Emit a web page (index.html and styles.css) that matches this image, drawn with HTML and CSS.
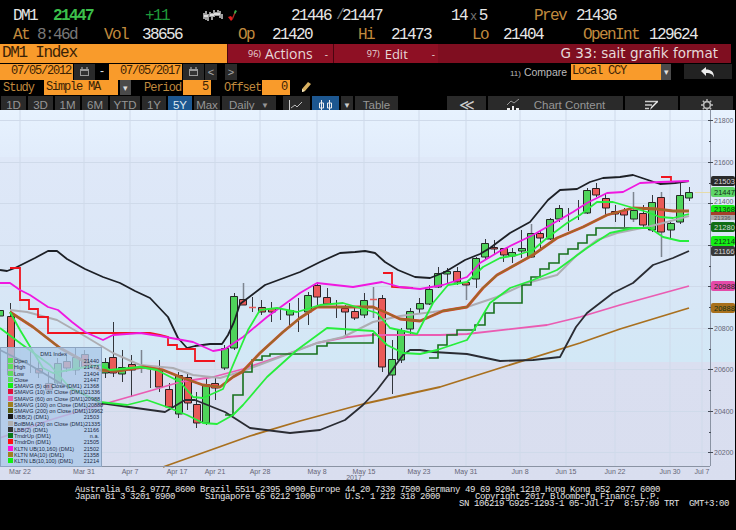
FILE: index.html
```html
<!DOCTYPE html>
<html lang="en">
<head>
    <meta charset="UTF-8">
    <meta name="viewport" content="width=device-width, initial-scale=1.0">
    <title>DM1 Index</title>
    <link rel="stylesheet" href="styles.css">
</head>
<body>

    <!-- quote lines -->
    <div class="quote quote-top">
        <span class="white">DM1</span>
        <span class="last">21447</span>
        <span class="change">+11</span>
        <svg class="spark" width="20" height="12" viewBox="0 0 20 12"><path d="M1 3v6M3 1v9M5 4v7M7 2v5M9 3v7M11 0v7M13 2v4M15 0v6M17 1v7M19 4v5M1 6h4M7 5h4M11 4h6" fill="none" stroke="#f2f2f2" stroke-width="1.3"/></svg>
        <svg class="tick" width="10" height="12" viewBox="0 0 10 12"><path d="M0 7l3 4 2-2-2-3z" fill="#e01e1e"/><path d="M4 8l1 1 3-7-1-1z" fill="#b02a22"/><path d="M6 3l1-3 2 1-2 3z" fill="#35b048"/></svg>
        <span class="white">21446</span>
        <span class="dim slash">/</span>
        <span class="white">21447</span>
        <span class="white">14<small class="dim times">x</small>5</span>
        <span class="label">Prev</span>
        <span class="white">21436</span>
    </div>
    <div class="quote quote-bottom">
        <span class="label">At</span>
        <span class="dim">8:46d</span>
        <span class="label">Vol</span>
        <span class="white">38656</span>
        <span class="label">Op</span>
        <span class="white">21420</span>
        <span class="label">Hi</span>
        <span class="white">21473</span>
        <span class="label">Lo</span>
        <span class="white">21404</span>
        <span class="label">OpenInt</span>
        <span class="white">129624</span>
    </div>

    <!-- title bar -->
    <div class="title-bar">
        <div class="ticker">DM1 Index</div>
        <div class="menu menu-actions"><b>96)</b> Actions <i>-</i></div>
        <div class="menu menu-edit"><b>97)</b> Edit <i>-</i></div>
        <div class="chart-name">G 33: sait grafik format</div>
    </div>

    <!-- dates and compare -->
    <div class="date-row">
        <div class="field date-field">07/05/2012</div>
        <div class="btn cal-btn"><svg width="11" height="10" viewBox="0 0 11 10"><path d="M1 2h9v7H1z" fill="#999"/><path d="M2 4h7v4H2z" fill="#333"/><path d="M3 0v2M8 0v2" stroke="#bbb"/></svg></div>
        <div class="date-dash">-</div>
        <div class="field date-field">07/05/2017</div>
        <div class="btn cal-btn"><svg width="11" height="10" viewBox="0 0 11 10"><path d="M1 2h9v7H1z" fill="#999"/><path d="M2 4h7v4H2z" fill="#333"/><path d="M3 0v2M8 0v2" stroke="#bbb"/></svg></div>
        <div class="btn nav-btn">&lt;</div>
        <div class="btn nav-btn nav-next">&gt;</div>
        <div class="compare"><small>11)</small> Compare</div>
        <div class="field ccy-field">Local CCY</div>
        <div class="dd">&#9662;</div>
        <div class="btn back-btn"><svg width="14" height="12" viewBox="0 0 14 12"><path d="M0 5l5-4v2.500c5 0 8 2 8 8-1-3-3-4.500-8-4.500v3z" fill="#eee"/></svg></div>
    </div>

    <!-- study -->
    <div class="study-row">
        <span class="study-label label-study">Study</span>
        <div class="field study-field">Simple MA</div>
        <div class="dd">&#9662;</div>
        <span class="study-label label-period">Period</span>
        <div class="field num-field">5</div>
        <span class="study-label label-offset">Offset</span>
        <div class="field num-field">0</div>
        <svg class="pencil" width="12" height="13" viewBox="0 0 12 13"><path d="M8 1l3 2-6 7-3 1 0-3z" fill="#d8b060"/><path d="M2 8l3 2-3 1z" fill="#f0e4c0"/></svg>
    </div>

    <!-- toolbar -->
    <div class="toolbar">
        <div class="tool">1D</div>
        <div class="tool">3D</div>
        <div class="tool">1M</div>
        <div class="tool">6M</div>
        <div class="tool">YTD</div>
        <div class="tool">1Y</div>
        <div class="tool active">5Y</div>
        <div class="tool">Max</div>
        <div class="tool">Daily &nbsp;<small>&#9660;</small></div>
        <div></div>
        <div class="tool"><svg width="15" height="11" viewBox="0 0 15 11"><path d="M.5 0v10.500H15" stroke="#ccc" fill="none"/><path d="M2 8l4-3 2 2 5-5" stroke="#bbb" fill="none"/></svg></div>
        <div class="tool active"><svg width="15" height="11" viewBox="0 0 15 11"><path d="M1.500 3h4v5h-4zM9.500 3h4v5h-4zM3.500 0v11M11.500 0v11" stroke="#eee" fill="none"/></svg></div>
        <div class="tool"><small class="bright">&#9660;</small></div>
        <div class="tool">Table</div>
        <div></div>
        <div class="tool bright">&#8810;</div>
        <div class="tool"><svg class="content-icon" width="14" height="12" viewBox="0 0 14 12"><path d="M1 6l4-4 3 2 5-4" stroke="#999" fill="none"/><path d="M1 9h3v3H1zM6 7h2v5H6zM10 9h3v3h-3z" fill="#eee"/></svg>Chart Content</div>
        <div class="tool"><svg width="13" height="11" viewBox="0 0 13 11"><path d="M0 1.500h13M0 5h7M0 8.500h4" stroke="#ccc" stroke-width="1.400"/><path d="M5 10l1-3 6-6 1 1-6 6z" fill="#eee"/></svg></div>
        <div class="tool"><svg width="12" height="12" viewBox="0 0 12 12"><circle cx="6" cy="6" r="3.400" fill="none" stroke="#bbb" stroke-width="1.600"/><path d="M6 0v2.400M6 9.600V12M0 6h2.400M9.600 6H12M1.800 1.800l1.700 1.700M8.500 8.500l1.700 1.700M10.200 1.800L8.500 3.500M3.500 8.500l-1.700 1.700" stroke="#bbb" stroke-width="1.400"/></svg></div>
    </div>

    <!-- chart -->
    <div class="chart">
        <svg class="chart-svg" width="736" height="370" viewBox="0 110 736 370">
            <defs>
                <linearGradient id="bgTop" x1="0" y1="0" x2="0" y2="1">
                    <stop offset="0" stop-color="#e7f2fe"/>
                    <stop offset="1" stop-color="#e1ecfb"/>
                </linearGradient>
                <linearGradient id="bgMid" x1="0" y1="0" x2="0" y2="1">
                    <stop offset="0" stop-color="#dfe8f8"/>
                    <stop offset="0.55" stop-color="#dae6f6"/>
                    <stop offset="1" stop-color="#d2e8f6"/>
                </linearGradient>
                <linearGradient id="bgLow" x1="0" y1="0" x2="0" y2="1">
                    <stop offset="0" stop-color="#dadff0"/>
                    <stop offset="1" stop-color="#d9deef"/>
                </linearGradient>
            </defs>

            <rect x="0" y="110" width="735" height="47" fill="url(#bgTop)"/>
            <rect x="0" y="157" width="735" height="205" fill="url(#bgMid)"/>
            <rect x="0" y="362" width="735" height="118" fill="url(#bgLow)"/>

            <!-- grid -->
            <path class="grid" d="M20 110V466M84 110V466M130 110V466M177 110V466M215 110V466M260 110V466M317 110V466M364 110V466M419 110V466M466 110V466M520 110V466M566 110V466M615 110V466M670 110V466M702 110V466M0 120.500H710M0 162.500H710M0 203.500H710M0 245.500H710M0 286.500H710M0 328.500H710M0 369.500H710M0 411.500H710M0 452.500H710"/>

            <!-- wicks -->
            <path class="wick" d="M10.500 303V316M30.500 350V373M38.500 360V378M48.500 372V392M57.500 358V385M66.500 354V372M75.500 348V375M84.500 350V369M105.500 358V378M113.500 322V377M122.500 350V382M131.500 355V397M150.500 365V388M159.500 360V392M169.500 383V410M178.500 372V418M187.500 372V410M196.500 392V428M206.500 378V425M215.500 378V400M224.500 345V370M234.500 293V350M252.500 297V312M261.500 300V315M271.500 302V322M280.500 308V320M289.500 303V327M298.500 298V332M308.500 292V325M317.500 282V305M327.500 288V305M336.500 300V318M345.500 305V335M354.500 308V320M364.500 293V318M382.500 295V372M392.500 340V394M401.500 328V363M410.500 308V335M419.500 298V314M429.500 285V305M438.500 267V288M447.500 268V283M457.500 267V285M476.500 257V288M485.500 239V259M494.500 240V255M503.500 248V262M512.500 248V263M521.500 230V258M540.500 230V248M550.500 218V240M559.500 205V222M568.500 208V231M578.500 200V220M587.500 188V214M596.500 183V197M605.500 193V215M615.500 205V222M624.500 208V227M643.500 205V228M652.500 195V232M670.500 220V238M680.500 182V224M689.500 187V201"/>
            <path class="wick-light" d="M141.500 350V373M243.500 283V305M373.500 287V318M466.500 282V300M531.500 224V258M633.500 192V222M661.500 192V257"/>

            <!-- candle bodies -->
            <path class="candle-up" d="M-3.500 310.500h7V316h-7zM54.500 363.500h7V383h-7zM72.500 357.500h7V370h-7zM101.500 362.500h7V373h-7zM118.500 367.500h7V374h-7zM175.500 375.500h7V414h-7zM202.500 384.500h7V423h-7zM221.500 348.500h7V368h-7zM230.500 296.500h7V348h-7zM286.500 310.500h7V315h-7zM304.500 295.500h7V312h-7zM360.500 300.500h7V315h-7zM388.500 359.500h7V375h-7zM397.500 330.500h7V360h-7zM406.500 311.500h7V329h-7zM416.500 303.500h7V309h-7zM425.500 289.500h7V304h-7zM434.500 273.500h7V287h-7zM443.500 271.500h7V274h-7zM472.500 258.500h7V279h-7zM481.500 243.500h7V257h-7zM508.500 252.500h7V256h-7zM518.500 248.500h7V251h-7zM527.500 233.500h7V257h-7zM546.500 219.500h7V239h-7zM555.500 208.500h7V219h-7zM583.500 190.500h7V213h-7zM630.500 210.500h7V219h-7zM648.500 202.500h7V230h-7zM667.500 223.500h7V230h-7zM676.500 195.500h7V222h-7zM685.500 192.500h7V198h-7z"/>
            <path class="candle-down" d="M7.500 316.500h7V375h-7zM35.500 368.500h7V373h-7zM45.500 383.500h7V390h-7zM63.500 361.500h7V368h-7zM81.500 354.500h7V367h-7zM109.500 357.500h7V373h-7zM128.500 364.500h7V370h-7zM155.500 370.500h7V387h-7zM165.500 389.500h7V407h-7zM184.500 377.500h7V403h-7zM193.500 404.500h7V423h-7zM211.500 383.500h7V388h-7zM239.500 299.500h7V305h-7zM258.500 307.500h7V312h-7zM268.500 308.500h7V312h-7zM313.500 285.500h7V297h-7zM323.500 297.500h7V304h-7zM341.500 308.500h7V312h-7zM351.500 311.500h7V318h-7zM378.500 298.500h7V367h-7zM453.500 271.500h7V282h-7zM462.500 282.500h7V285h-7zM490.500 247.500h7V249h-7zM500.500 248.500h7V255h-7zM536.500 233.500h7V238h-7zM592.500 188.500h7V195h-7zM602.500 198.500h7V208h-7zM611.500 211.500h7V214h-7zM620.500 210.500h7V215h-7zM639.500 213.500h7V225h-7zM657.500 197.500h7V232h-7z"/>
            <path class="doji" d="M249 307.500h7M370 299.500h7"/>

            <!-- studies -->
            <polyline class="line slow-brown" points="163,467 250,436 300,421 363,404 440,387 500,368 580,343 620,329 689,308"/>
            <polyline class="line slow-pink" points="0,438 50,420 83,410 153,390 180,382 213,377 243,369 290,353 317,343 347,337 373,335 440,335 467,334 547,325 580,317 620,305 689,286"/>
            <polyline class="line band-black" points="0,270 7,271 15,268 35,258 48,251 57,251 67,259 85,269 103,277 120,283 135,291 150,298 168,317 178,338 187,348 195,346 210,344 222,344 228,335 234,322 240,304 265,285 300,272 320,262 340,253 355,252 365,251 375,253 385,262 398,270 415,277 430,278 445,272 465,260 480,254 490,248 510,233 530,222 548,200 560,190 577,189 590,182 603,178 620,177 633,175 648,180 660,184 675,183 689,181"/>
            <polyline class="line band-dark" points="0,350 30,365 60,383 85,395 100,403 165,412 185,400 195,400 225,412 250,428 290,433 320,430 345,420 363,405 377,390 390,373 403,355 410,350 420,350 433,352 467,354 500,361 533,360 560,357 576,327 587,313 613,293 633,283 653,265 673,258 689,251"/>
            <polyline class="line mid-gray" points="10,310 27,312 57,320 83,335 113,353 140,365 173,368 193,375 220,378 243,371 267,362 317,343 343,337 373,322 400,316 433,312 467,307 497,297 527,283 557,275 577,255 597,240 617,233 647,227 667,222 689,216"/>
            <polyline class="line step-green" points="225,415 233,415 233,395 243,395 243,372 252,372 252,360 262,360 262,356 270,356 270,354 317,354 317,346 327,346 327,343 373,343 373,333"/>
            <polyline class="line step-green" points="429,358 438,358 438,345 447,345 447,335 457,335 457,330 475,330 475,325 485,325 485,313 494,313 494,303 522,303 522,285 531,285 531,277 540,277 540,269 549,269 549,263 559,263 559,254 568,254 568,249 578,249 578,243 587,243 587,235 596,235 596,228 650,228 650,230"/>
            <polyline class="line step-red" points="10,268 20,268 20,300 29,300 29,309 38,309 38,317 48,317 48,333 150,333 160,335 168,337 168,345 177,345 177,349 195,349 195,361 215,361"/>
            <polyline class="line step-red" points="383,273 392,273 392,287 413,288"/>
            <polyline class="line step-red" points="661,177 671,177 671,182"/>
            <polyline class="line ma-red" points="10,312 33,327 60,348 100,370 117,371 143,367 163,370 183,378 203,385 220,387 233,377 242,372 260,353 283,332 300,318 317,307 343,307 373,307 387,313 400,319 420,321 443,311 467,307 483,288 497,275 533,255 557,238 583,227 607,215 633,208 657,209 673,211 689,211"/>
            <polyline class="line ma-brown" points="10,312 33,327 60,348 100,370 117,371 143,367 163,370 183,378 203,385 220,387 233,377 242,372 260,353 283,332 300,318 317,307 343,307 373,307 387,313 400,319 420,321 443,311 467,307 483,288 497,275 533,255 557,238 583,227 607,215 633,208 657,209 673,211 689,211"/>
            <polyline class="line upper-magenta" points="0,283 10,283 20,290 30,295 48,307 58,310 72,322 85,332 103,340 113,335 140,333 160,336 193,342 213,351 225,349 243,337 267,317 300,293 317,283 353,287 382,282 400,287 420,289 443,285 467,277 480,263 500,251 533,235 573,212 587,203 607,193 623,192 640,183 660,182 689,181"/>
            <polyline class="line fast-green" points="10,312 20,330 43,368 53,373 80,368 100,365 110,370 140,367 157,370 180,382 193,397 203,398 223,389 233,365 248,330 260,310 277,308 297,312 320,305 343,303 360,308 377,313 390,328 417,334 433,303 448,285 467,282 483,267 500,258 517,255 533,250 547,238 567,223 580,215 597,202 613,202 630,207 647,212 660,217 673,218 689,214"/>
            <polyline class="line fast-green" points="0,328 20,343 50,365 70,388 100,402 127,405 147,400 167,407 187,415 203,423 217,424 233,415 243,405 267,377 297,350 327,328 373,331 387,345 403,353 420,354 437,350 467,340 477,325 490,303 510,288 533,280 557,270 587,248 610,233 633,228 650,228 663,237 680,241 689,241"/>
            <path class="last-line" d="M695 192.500H710"/>

            <!-- right axis -->
            <path class="axis" d="M710.500 110V466M0 466.500H710"/>
            <path class="axis-tick" d="M708 120.500h5M709 141.500h2M708 162.500h5M709 183.500h2M708 203.500h5M709 224.500h2M708 245.500h5M709 266.500h2M708 286.500h5M709 307.500h2M708 328.500h5M709 349.500h2M708 369.500h5M709 390.500h2M708 411.500h5M709 432.500h2M708 452.500h5"/>
            <text class="axis-label" x="714" y="122.500">21800</text>
            <text class="axis-label" x="714" y="164.500">21600</text>
            <text class="axis-label" x="714" y="204">21400</text>
            <text class="axis-label" x="714" y="330.500">20800</text>
            <text class="axis-label" x="714" y="371.500">20600</text>
            <text class="axis-label" x="714" y="413.500">20400</text>
            <text class="axis-label" x="714" y="454.500">20200</text>

            <!-- price tags on the axis -->
            <rect x="711" y="176" width="24" height="10" rx="2" fill="#2a2a2a"/>
            <text class="tag-label tag-light" x="714" y="183.500">21503</text>
            <rect x="711" y="187" width="24" height="10" rx="2" fill="#5fd668"/>
            <text class="tag-label" x="714" y="194.500">21447</text>
            <rect x="711" y="214" width="24" height="6" fill="#a9a9a9"/>
            <rect x="711" y="205" width="24" height="8" rx="2" fill="#15ee15"/>
            <rect x="711" y="212" width="24" height="3" fill="#a5402a"/>
            <text class="tag-label" x="714" y="211.500">21368</text>
            <text class="tag-label tag-faint" x="714" y="220">21336</text>
            <rect x="711" y="222" width="24" height="10" rx="2" fill="#0f6e14"/>
            <text class="tag-label tag-light" x="714" y="229.500">21280</text>
            <rect x="711" y="236" width="24" height="10" rx="2" fill="#15ee15"/>
            <text class="tag-label" x="714" y="243.500">21214</text>
            <rect x="711" y="246" width="24" height="10" rx="2" fill="#3a3a3a"/>
            <text class="tag-label tag-light" x="714" y="253.500">21166</text>
            <rect x="711" y="281" width="24" height="10" rx="2" fill="#e44aa8"/>
            <text class="tag-label" x="714" y="288.500">20988</text>
            <rect x="711" y="303" width="24" height="10" rx="2" fill="#a8701c"/>
            <text class="tag-label" x="714" y="310.500">20888</text>

            <!-- date axis -->
            <g class="date-labels">
                <text x="20" y="473.500">Mar 22</text>
                <text x="84" y="473.500">Mar 31</text>
                <text x="130" y="473.500">Apr 7</text>
                <text x="177" y="473.500">Apr 17</text>
                <text x="215" y="473.500">Apr 21</text>
                <text x="260" y="473.500">Apr 28</text>
                <text x="317" y="473.500">May 8</text>
                <text x="364" y="473.500">May 15</text>
                <text x="419" y="473.500">May 23</text>
                <text x="466" y="473.500">May 31</text>
                <text x="520" y="473.500">Jun 8</text>
                <text x="566" y="473.500">Jun 15</text>
                <text x="615" y="473.500">Jun 22</text>
                <text x="670" y="473.500">Jun 30</text>
                <text x="702" y="473.500">Jul 7</text>
                <text x="354" y="479.500">2017</text>
            </g>
        </svg>

        <!-- legend lies over the chart -->
        <div class="legend">
            <div class="legend-title">DM1 Index</div>
            <div class="legend-row"><i class="swatch sw-ohlc"></i><span>Open</span><span>21440</span></div>
            <div class="legend-row"><i class="swatch sw-ohlc"></i><span>High</span><span>21473</span></div>
            <div class="legend-row"><i class="swatch sw-ohlc"></i><span>Low</span><span>21404</span></div>
            <div class="legend-row"><i class="swatch sw-ohlc"></i><span>Close</span><span>21447</span></div>
            <div class="legend-row"><i class="swatch sw-lime"></i><span>SMAVG (5) on Close (DM1)</span><span>21368</span></div>
            <div class="legend-row"><i class="swatch sw-red"></i><span>SMAVG (10) on Close (DM1)</span><span>21336</span></div>
            <div class="legend-row"><i class="swatch sw-pink"></i><span>SMAVG (60) on Close (DM1)</span><span>20988</span></div>
            <div class="legend-row"><i class="swatch sw-olive"></i><span>SMAVG (100) on Close (DM1)</span><span>20888</span></div>
            <div class="legend-row"><i class="swatch sw-darkolive"></i><span>SMAVG (200) on Close (DM1)</span><span>19962</span></div>
            <div class="legend-row"><i class="swatch sw-black"></i><span>UBB(2) (DM1)</span><span>21503</span></div>
            <div class="legend-row"><i class="swatch sw-gray"></i><span>BolBMA (20) on Close (DM1)</span><span>21335</span></div>
            <div class="legend-row"><i class="swatch sw-dark"></i><span>LBB(2) (DM1)</span><span>21166</span></div>
            <div class="legend-row"><i class="swatch sw-green"></i><span>TrndrUp (DM1)</span><span>n.a.</span></div>
            <div class="legend-row"><i class="swatch sw-brightred"></i><span>TrndrDn (DM1)</span><span>21505</span></div>
            <div class="legend-row"><i class="swatch sw-magenta"></i><span>KLTN UB(10,160) (DM1)</span><span>21502</span></div>
            <div class="legend-row"><i class="swatch sw-olive"></i><span>KLTN MA(10) (DM1)</span><span>21358</span></div>
            <div class="legend-row"><i class="swatch sw-lime"></i><span>KLTN LB(10,100) (DM1)</span><span>21214</span></div>
        </div>
    </div>

    <!-- footer -->
    <div class="footer">
        <div class="footer-line">Australia 61 2 9777 8600 Brazil 5511 2395 9000 Europe 44 20 7330 7500 Germany 49 69 9204 1210 Hong Kong 852 2977 6000</div>
        <div class="footer-line">Japan 81 3 3201 8900      Singapore 65 6212 1000      U.S. 1 212 318 2000       Copyright 2017 Bloomberg Finance L.P.</div>
        <div class="footer-line footer-sn">SN 106219 G925-1293-1 05-Jul-17  8:57:09 TRT  GMT+3:00</div>
    </div>

</body>
</html>
```

FILE: styles.css
```css
html, body {
    margin: 0;
    padding: 0;
    background-color: #000;
}
body {
    width: 736px;
    height: 530px;
    overflow: hidden;
    font-family: "Liberation Sans", Arial, sans-serif;
    color: #ccc;
}

/* quote lines */
.quote {
    display: grid;
    align-items: center;
    padding-left: 13px;
    font-family: "Liberation Mono", monospace;
    font-size: 16px;
    letter-spacing: -1.6px;
}
.quote-top {
    height: 24px;
    padding-top: 1px;
    box-sizing: border-box;
    margin-top: 3px;
    grid-template-columns: 40px 92px 58px 25px 63px 45px 6px 109px 83px 42px auto;
}
.quote-bottom {
    height: 19px;
    margin-top: -2px;
    grid-template-columns: 24px 67px 38px 96px 34px 86px 33px 81px 31px 80px 66px auto;
}
.white { color: #e6e6e6; }
.dim { color: #777; }
.label { color: #c08a3e; }
.last { color: #3cc04c; font-weight: bold; }
.change { color: #1f9a3a; }
.slash { font-size: 15px; }
.quote small { font-size: 12px; }
.times { margin: 0 3px; }
.spark, .tick { display: block; }

/* title bar */
.title-bar {
    display: flex;
    height: 19px;
    width: 731px;
    background-color: #7f0e20;
    color: #e6d8d8;
}
.ticker {
    width: 227px;
    padding-left: 2px;
    box-sizing: border-box;
    background-color: #f99b2b;
    color: #3a2206;
    font-family: "Liberation Mono", monospace;
    font-size: 16px;
    letter-spacing: -1.3px;
    line-height: 19px;
}
.menu {
    display: flex;
    align-items: center;
    justify-content: flex-end;
    gap: 4px;
    box-sizing: border-box;
    background-color: #8e1024;
    border-left: 1px solid #4a0510;
    font-size: 14px;
    font-family: "Open Sans", sans-serif;
}
.menu b { font-size: 9px; font-weight: normal; }
.menu i { font-style: normal; font-size: 10px; }
.menu-actions { width: 106px; padding-right: 5px; }
.menu-edit { width: 105px; padding-right: 3px; gap: 5px; font-size: 13px; }
.menu-edit i { margin-left: 19px; }
.menu-actions i { margin-left: 8px; }
.chart-name {
    flex: 1;
    padding-right: 13px;
    text-align: right;
    font-family: "DejaVu Sans", sans-serif;
    font-size: 13.5px;
    line-height: 19px;
}

/* form rows */
.field {
    background-color: #f99b2b;
    color: #3a2206;
    font-family: "Liberation Mono", monospace;
    font-size: 12px;
    letter-spacing: -1.2px;
    box-sizing: border-box;
}
.btn {
    display: flex;
    align-items: center;
    justify-content: center;
    background-color: #2a2a2a;
    color: #aaa;
}
.dd {
    display: flex;
    align-items: center;
    justify-content: center;
    background-color: #4a4a4a;
    color: #ddd;
    font-size: 9px;
}
.date-row {
    display: flex;
    height: 16px;
    margin-top: 1px;
}
.date-field {
    width: 73px;
    text-align: right;
    padding-right: 2px;
    line-height: 15px;
}
.cal-btn { width: 21px; margin-left: 1px; }
.date-dash {
    width: 14px;
    color: #ddd;
    text-align: center;
    font-size: 12px;
}
.nav-btn { width: 12px; font-size: 11px; margin-left: 1px; }
.nav-next { margin-left: 8px; }
.compare {
    margin-left: 273px;
    width: 61px;
    color: #bbb;
    font-size: 10.5px;
    line-height: 16px;
    white-space: nowrap;
}
.compare small { font-size: 8px; }
.ccy-field {
    width: 90px;
    line-height: 15px;
    padding-left: 1px;
}
.date-row .dd { width: 10px; }
.back-btn {
    width: 48px;
    margin-left: 13px;
    height: 15px;
    background-color: #222;
}

.study-row {
    display: flex;
    align-items: center;
    height: 15px;
}
.study-label {
    color: #c08a3e;
    font-family: "Liberation Mono", monospace;
    font-size: 12px;
    letter-spacing: -1px;
}
.label-study { width: 41px; padding-left: 3px; box-sizing: border-box; margin-right: 3px; }
.label-period { margin-left: 13px; width: 39px; }
.label-offset { margin-left: 13px; width: 38px; }
.study-field {
    width: 74px;
    height: 15px;
    line-height: 14px;
    padding-left: 2px;
}
.study-row .dd { width: 11px; height: 15px; margin-left: 2px; }
.num-field {
    width: 28px;
    height: 15px;
    line-height: 14px;
    text-align: right;
    padding-right: 3px;
}
.pencil { margin-left: 10px; }

/* toolbar */
.toolbar {
    display: grid;
    grid-template-columns: 25px 25px 25px 26px 30px 24px 24px 26px 54px 3px 27px 27px 12px 43px 45px 39px 135px 53px 53px;
    gap: 2px;
    height: 14px;
    padding-left: 1px;
    margin-top: 1px;
}
.tool {
    display: flex;
    align-items: center;
    justify-content: center;
    background-color: #2a2a2a;
    color: #969696;
    font-size: 11.5px;
}
.tool small { font-size: 8px; }
.tool.active {
    background-color: #1d5790;
    color: #dfe8f2;
}
.bright { color: #ccc; }
.tool.bright { font-size: 15px; }
.content-icon { margin-right: 14px; }

/* chart */
.chart {
    position: relative;
    height: 370px;
}
.chart-svg {
    display: block;
}
.grid { stroke: #cfdaea; stroke-width: 1; fill: none; }
.wick { stroke: #33363c; stroke-width: 1; fill: none; }
.wick-light { stroke: #7d8590; stroke-width: 1.5; fill: none; }
.candle-up { fill: #4fd45a; stroke: #232a24; stroke-width: 1; }
.candle-down { fill: #ea5a58; stroke: #2c2022; stroke-width: 1; }
.doji { stroke: #ea5a58; stroke-width: 1.5; }
.line { fill: none; stroke-linejoin: round; stroke-width: 1.8; }
.slow-brown { stroke: #a9701f; }
.slow-pink { stroke: #ea5cb2; }
.band-black { stroke: #1d2026; }
.band-dark { stroke: #2a2c33; }
.mid-gray { stroke: #adadb2; stroke-width: 2; }
.step-green { stroke: #17701d; stroke-linejoin: miter; stroke-width: 1.6; }
.step-red { stroke: #f0141e; stroke-linejoin: miter; }
.ma-red { stroke: #e0432c; stroke-width: 2.8; }
.ma-brown { stroke: #9a6a2a; stroke-width: 1.8; }
.upper-magenta { stroke: #f018e0; }
.fast-green { stroke: #27ee3c; }
.last-line { stroke: #e6dcaa; stroke-width: 1; }
.axis { stroke: #8a93a3; stroke-width: 1; fill: none; }
.axis-tick { stroke: #444a55; stroke-width: 1; fill: none; }
.axis-label {
    font-size: 7px;
    fill: #667;
}
.tag-label {
    font-size: 7.5px;
    fill: #12301a;
}
.tag-light { fill: #d8d8d8; }
.tag-faint { fill: #555; font-size: 6px; }
.date-labels text {
    font-size: 7px;
    fill: #667;
    text-anchor: middle;
}

/* legend */
.legend {
    position: absolute;
    left: 0;
    top: 237px;
    width: 102px;
    height: 120px;
    box-sizing: border-box;
    padding: 3px 2px 0 7px;
    background-color: rgba(170, 200, 232, 0.78);
    border: 1px solid #8da4c0;
    color: #1b2a44;
    font-size: 5.5px;
    line-height: 6.25px;
}
.legend-title {
    text-align: center;
    height: 7px;
}
.legend-row {
    display: flex;
    height: 6.25px;
    white-space: nowrap;
}
.legend-row span:last-child { margin-left: auto; }
.swatch {
    flex: none;
    width: 5px;
    height: 5px;
    margin-right: 1px;
}
.sw-ohlc { background-color: #5fdc5f; }
.sw-lime { background-color: #12f012; }
.sw-red { background-color: #e0103c; }
.sw-pink { background-color: #e85cb0; }
.sw-olive { background-color: #a08020; }
.sw-darkolive { background-color: #5a6010; }
.sw-black { background-color: #161616; }
.sw-gray { background-color: #b0b0b0; }
.sw-dark { background-color: #333; }
.sw-green { background-color: #0a7a1a; }
.sw-brightred { background-color: #ff1010; }
.sw-magenta { background-color: #ff10e0; }

/* footer */
.footer {
    padding: 7px 0 0 75px;
    color: #e4e4e4;
    font-family: "Liberation Mono", monospace;
    font-size: 9px;
    letter-spacing: -0.4px;
    line-height: 7px;
}
.footer-line {
    white-space: pre;
}
.footer-sn {
    margin-left: 384px;
}
```
